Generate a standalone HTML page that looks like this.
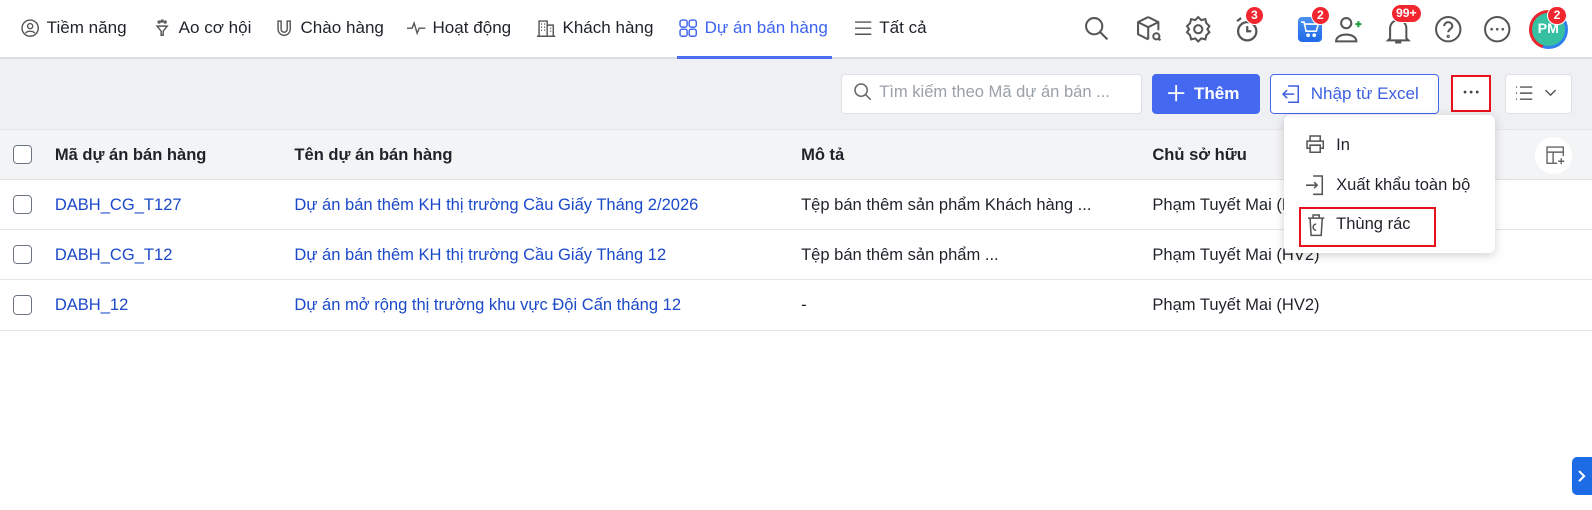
<!DOCTYPE html>
<html style="zoom:1.0153"><head><meta charset="utf-8"><style>
*{box-sizing:border-box;margin:0;padding:0}
body{width:1568px;height:502px;overflow:hidden;background:#fff;font-family:"Liberation Sans",sans-serif;font-size:16.3px;color:#1f2329;position:relative}
.hdr{position:absolute;left:0;top:0;width:1568px;height:58px;background:#fff;border-bottom:2px solid #d9dce1}
.nav{position:absolute;top:18px;font-size:16.8px;color:#1f2329;display:flex;align-items:center;gap:6px;white-space:nowrap}
.nav svg{width:20px;height:20px}
.act{color:#3d63f0}
.uline{position:absolute;left:667px;top:55px;width:152px;height:3px;background:#4d6ef0}
.ico{position:absolute;top:14px}
.badge{position:absolute;background:#f2262f;color:#fff;font-weight:bold;font-size:12px;border-radius:10px;height:19px;min-width:19px;text-align:center;line-height:17px;padding:0 4px;border:1.5px solid #fff}
.tb{position:absolute;left:0;top:58px;width:1568px;height:69px;background:#eef0f3}
.box{position:absolute;border-radius:4px}
.th{position:absolute;left:0;top:127px;width:1568px;height:50px;background:#f3f4f6;border-bottom:1px solid #dfe1e5;border-top:1px solid #e3e5e8}
.row{position:absolute;left:0;width:1568px;height:50px;border-bottom:1px solid #e3e5e8}
.c{position:absolute;top:15px;white-space:nowrap}
.lnk{color:#1b49c9}
.cb{position:absolute;left:13px;top:15px;width:19px;height:19px;border:1.5px solid #6b7280;border-radius:4px;background:#fff}
.b{font-weight:bold}
.mi{position:absolute;left:51px;font-size:16.3px;white-space:nowrap}
</style></head><body>
<div class="hdr">
<div class="nav" style="left:20px"><svg viewBox="0 0 20 20" fill="none" stroke="#555" stroke-width="1.4"><circle cx="10" cy="10" r="8"/><circle cx="10" cy="8" r="2.5"/><path d="M5.5 15c1-2.5 8-2.5 9 0"/></svg>Tiềm năng</div>
<div class="nav" style="left:150px"><svg viewBox="0 0 20 20" fill="none" stroke="#555" stroke-width="1.4"><path d="M5 8h10l-4 5v4h-2v-4z"/><circle cx="7" cy="4" r="1"/><circle cx="13" cy="4" r="1"/><circle cx="10" cy="3" r="1"/></svg>Ao cơ hội</div>
<div class="nav" style="left:270px"><svg viewBox="0 0 20 20" fill="none" stroke="#555" stroke-width="1.4"><path d="M4 3v8a6 6 0 0012 0V3h-3v8a3 3 0 01-6 0V3z"/></svg>Chào hàng</div>
<div class="nav" style="left:400px"><svg viewBox="0 0 20 20" fill="none" stroke="#555" stroke-width="1.4"><path d="M1 10h5l2-5 3 10 2-5h6"/></svg>Hoạt động</div>
<div class="nav" style="left:528px"><svg viewBox="0 0 20 20" fill="none" stroke="#555" stroke-width="1.4"><path d="M3 18V3h8v15M11 7h6v11M1 18h18M5 6h1M8 6h1M5 9h1M8 9h1M5 12h1M8 12h1M14 10h1M14 13h1"/></svg>Khách hàng</div>
<div class="nav act" style="left:668px"><svg viewBox="0 0 20 20" fill="none" stroke="#3d63f0" stroke-width="1.4"><rect x="2" y="2" width="7" height="7" rx="2"/><rect x="11" y="2" width="7" height="7" rx="2"/><rect x="2" y="11" width="7" height="7" rx="2"/><rect x="11" y="11" width="7" height="7" rx="2"/></svg>Dự án bán hàng</div>
<div class="nav" style="left:840px"><svg viewBox="0 0 20 20" fill="none" stroke="#555" stroke-width="1.4"><path d="M2 4h16M2 10h16M2 16h16"/></svg>Tất cả</div>
<div class="uline"></div>
<svg class="ico" style="left:1066px" width="30" height="30" viewBox="0 0 30 30" fill="none" stroke="#555" stroke-width="2"><circle cx="12" cy="12" r="8"/><path d="M18 18l7 7"/></svg>
<svg class="ico" style="left:1117px" width="30" height="30" viewBox="0 0 30 30" fill="none" stroke="#555" stroke-width="2"><path d="M14 3l10 5v8M14 3L4 8v12l10 5M4 8l10 5 10-5M14 13v12"/><circle cx="22" cy="22" r="3"/><path d="M24 24l2 2"/></svg>
<svg class="ico" style="left:1165px" width="30" height="30" viewBox="0 0 30 30" fill="none" stroke="#555" stroke-width="2"><circle cx="15" cy="15" r="4"/><path d="M15 3l3 3 4-1 1 4 3 3-2 3 2 3-3 3-1 4-4-1-3 3-3-3-4 1-1-4-3-3 2-3-2-3 3-3 1-4 4 1z"/></svg>
<svg class="ico" style="left:1213px" width="30" height="30" viewBox="0 0 30 30" fill="none" stroke="#555" stroke-width="2.2"><circle cx="15" cy="17" r="9"/><path d="M15 12v5h4M5 7l4-3"/></svg>
<div class="badge" style="left:1226px;top:6px">3</div>
<div style="position:absolute;left:1278px;top:17px;width:24px;height:24px;border-radius:4px;background:linear-gradient(#4a90f0,#1e6ae8)"></div>
<svg class="ico" style="left:1280px;top:20px" width="20" height="18" viewBox="0 0 20 18" fill="none" stroke="#fff" stroke-width="1.6"><path d="M1 2h3l2 9h10l2-7H5"/><circle cx="8" cy="15" r="1"/><circle cx="14" cy="15" r="1"/></svg>
<div class="badge" style="left:1291px;top:6px">2</div>
<svg class="ico" style="left:1312px" width="34" height="30" viewBox="0 0 34 30" fill="none" stroke="#555" stroke-width="2"><circle cx="14" cy="9" r="5"/><path d="M4 27c0-9 20-9 20 0z"/><path d="M26 7v6M23 10h6" stroke="#1a9e3a"/></svg>
<svg class="ico" style="left:1362px" width="30" height="32" viewBox="0 0 30 32" fill="none" stroke="#555" stroke-width="2"><path d="M7 24V14a8 8 0 0116 0v10l2 2H5zM12 28h6"/></svg>
<div class="badge" style="left:1370px;top:4px">99+</div>
<svg class="ico" style="left:1411px" width="30" height="30" viewBox="0 0 30 30" fill="none" stroke="#555" stroke-width="2"><circle cx="15" cy="15" r="12"/><path d="M11 12a4 4 0 118 0c0 3-4 3-4 6"/><circle cx="15" cy="22" r=".6"/></svg>
<svg class="ico" style="left:1460px" width="30" height="30" viewBox="0 0 30 30" fill="none" stroke="#555" stroke-width="2"><circle cx="15" cy="15" r="12"/><circle cx="9.5" cy="15" r="1.3" fill="#555" stroke="none"/><circle cx="15" cy="15" r="1.3" fill="#555" stroke="none"/><circle cx="20.5" cy="15" r="1.3" fill="#555" stroke="none"/></svg>
<div style="position:absolute;left:1506px;top:10px;width:38px;height:38px;border-radius:50%;background:conic-gradient(#2f80ed 0 55%,#e8262f 55% 100%);padding:3px"><div style="width:32px;height:32px;border-radius:50%;background:#36c0a2;color:#fff;font-weight:bold;font-size:14px;text-align:center;line-height:32px">PM</div></div>
<div class="badge" style="left:1524px;top:6px">2</div>
</div>
<div class="tb"></div>
<div class="box" style="left:828px;top:73px;width:297px;height:39px;background:#fff;border:1px solid #dde0e4"></div>
<svg style="position:absolute;left:840px;top:81px" width="20" height="20" viewBox="0 0 20 20" fill="none" stroke="#666" stroke-width="1.5"><circle cx="8" cy="8" r="6"/><path d="M12.5 12.5l5 5"/></svg>
<div style="position:absolute;left:866px;top:81px;color:#9aa0a8;font-size:16.3px;white-space:nowrap">Tìm kiếm theo Mã dự án bán ...</div>
<div class="box" style="left:1135px;top:73px;width:106px;height:39px;background:#4468f0;color:#fff;font-weight:bold;font-size:16.8px;line-height:39px;padding-left:41px">Thêm</div>
<svg style="position:absolute;left:1148px;top:82px" width="20" height="20" viewBox="0 0 20 20" stroke="#fff" stroke-width="1.8"><path d="M10 2v16M2 10h16"/></svg>
<div class="box" style="left:1251px;top:73px;width:166px;height:39px;background:#fff;border:1px solid #4468f0;color:#3d5fe0;font-size:16.8px;line-height:37px;padding-left:39px;white-space:nowrap">Nhập từ Excel</div>
<svg style="position:absolute;left:1261px;top:82px" width="22" height="22" viewBox="0 0 22 22" fill="none" stroke="#3d5fe0" stroke-width="1.5"><path d="M8 3h10v16H8M3 11h11M7 7l-4 4 4 4"/></svg>
<div class="box" style="left:1429px;top:74px;width:40px;height:36px;background:#fff;border:2.5px solid #e8101a;border-radius:0"></div>
<svg style="position:absolute;left:1440px;top:88px" width="18" height="6" viewBox="0 0 18 6" fill="#444"><circle cx="3" cy="3" r="1.4"/><circle cx="9" cy="3" r="1.4"/><circle cx="15" cy="3" r="1.4"/></svg>
<div class="box" style="left:1482px;top:73px;width:66px;height:39px;background:#fff;border:1px solid #dde0e4"></div>
<svg style="position:absolute;left:1492px;top:83px" width="44" height="20" viewBox="0 0 44 20" fill="none" stroke="#555" stroke-width="1.4"><path d="M1 3h1M1 9h1M1 15h1M5 3h12M5 9h12M5 15h12M30 6l5 5 5-5"/></svg>
<div class="th">
<div class="cb"></div>
<div class="c b" style="left:54px">Mã dự án bán hàng</div>
<div class="c b" style="left:290px">Tên dự án bán hàng</div>
<div class="c b" style="left:789px">Mô tả</div>
<div class="c b" style="left:1135px">Chủ sở hữu</div>
<div style="position:absolute;left:1512px;top:7px;width:36px;height:36px;border-radius:50%;background:#fff"></div>
<svg style="position:absolute;left:1521px;top:14px" width="22" height="22" viewBox="0 0 22 22" fill="none" stroke="#666" stroke-width="1.4"><path d="M13 19H3V3h16v9M3 8h16M9 8v11M17 14v6M14 17h6"/></svg>
</div>
<div class="row" style="top:177px"><div class="cb"></div><div class="c lnk" style="left:54px">DABH_CG_T127</div><div class="c lnk" style="left:290px">Dự án bán thêm KH thị trường Cầu Giấy Tháng 2/2026</div><div class="c" style="left:789px">Tệp bán thêm sản phẩm Khách hàng ...</div><div class="c" style="left:1135px">Phạm Tuyết Mai (HV2)</div></div>
<div class="row" style="top:227px;height:49px"><div class="cb" style="top:14px"></div><div class="c lnk" style="left:54px;top:14px">DABH_CG_T12</div><div class="c lnk" style="left:290px;top:14px">Dự án bán thêm KH thị trường Cầu Giấy Tháng 12</div><div class="c" style="left:789px;top:14px">Tệp bán thêm sản phẩm ...</div><div class="c" style="left:1135px;top:14px">Phạm Tuyết Mai (HV2)</div></div>
<div class="row" style="top:276px"><div class="cb"></div><div class="c lnk" style="left:54px">DABH_12</div><div class="c lnk" style="left:290px">Dự án mở rộng thị trường khu vực Đội Cấn tháng 12</div><div class="c" style="left:789px">-</div><div class="c" style="left:1135px">Phạm Tuyết Mai (HV2)</div></div>
<div style="position:absolute;left:1265px;top:113px;width:207px;height:136px;background:#fff;border-radius:6px;box-shadow:0 2px 10px rgba(0,0,0,.18)">
<svg style="position:absolute;left:19px;top:18px" width="22" height="22" viewBox="0 0 22 22" fill="none" stroke="#555" stroke-width="1.5"><path d="M6 8V3h10v5M6 15H3V8h16v7h-3M6 12h10v7H6z"/></svg>
<div class="mi" style="top:20px">In</div>
<svg style="position:absolute;left:19px;top:57px" width="22" height="24" viewBox="0 0 22 24" fill="none" stroke="#555" stroke-width="1.5"><path d="M9 3h9v18H9M2 12h11M10 9l3 3-3 3"/></svg>
<div class="mi" style="top:59px">Xuất khẩu toàn bộ</div>
<div style="position:absolute;left:14px;top:91px;width:135px;height:39px;border:2.5px solid #e8101a"></div>
<svg style="position:absolute;left:21px;top:97px" width="20" height="24" viewBox="0 0 20 24" fill="none" stroke="#555" stroke-width="1.5"><path d="M2 5h16M7 5V2h6v3M4 5l1 17h10l1-17M10 11a3 3 0 100 6"/></svg>
<div class="mi" style="top:98px">Thùng rác</div>
</div>
<div style="position:absolute;left:1548px;top:450px;width:20px;height:38px;background:#1e6be6;border-radius:5px 0 0 5px"></div>
<svg style="position:absolute;left:1552px;top:462px" width="12" height="14" viewBox="0 0 12 14" fill="none" stroke="#fff" stroke-width="2"><path d="M3 2l5 5-5 5"/></svg>
</body></html>
